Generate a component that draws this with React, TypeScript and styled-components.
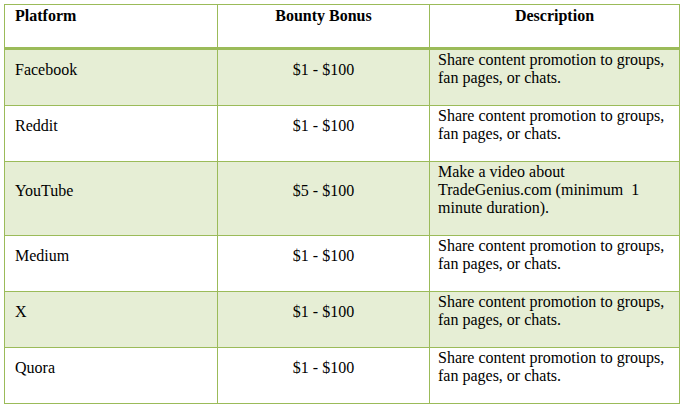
import * as React from 'react';
import styled, { createGlobalStyle } from 'styled-components';

const BORDER = '#9bbb59';
const SHADE = '#e6eed5';

const GlobalStyle = createGlobalStyle`
  html, body {
    margin: 0;
    padding: 0;
    background: #ffffff;
  }
`;

const Page = styled.div`
  padding: 4px 0 0 4px;
  font-family: 'Liberation Serif', 'Times New Roman', serif;
  font-size: 16px;
  line-height: 18px;
  color: #000000;
`;

const Table = styled.table`
  border-collapse: collapse;
  table-layout: fixed;
  width: 675px;
  border: 1px solid ${BORDER};
`;

type Align = 'left' | 'center';

const HeaderCell = styled.th<{ $align: Align }>`
  height: 40px;
  padding: 2px ${(p) => (p.$align === 'left' ? '10px' : '8px')} 0;
  border: 1px solid ${BORDER};
  border-bottom: 3px solid ${BORDER};
  text-align: ${(p) => p.$align};
  vertical-align: top;
  font-weight: bold;
`;

const Row = styled.tr<{ $shaded: boolean }>`
  background: ${(p) => (p.$shaded ? SHADE : '#ffffff')};
`;

const Cell = styled.td<{ $align: Align }>`
  padding: 3px ${(p) => (p.$align === 'left' ? '10px' : '8px')} 19px;
  border: 1px solid ${BORDER};
  text-align: ${(p) => p.$align};
  vertical-align: middle;
`;

const DescCell = styled.td`
  padding: 1px 8px 18px;
  border: 1px solid ${BORDER};
  vertical-align: top;
`;

const Line = styled.div`
  white-space: pre;
`;

const shareText = ['Share content promotion to groups,', 'fan pages, or chats.'];

const rows = [
  { platform: 'Facebook', bonus: '$1 - $100', desc: shareText },
  { platform: 'Reddit', bonus: '$1 - $100', desc: shareText },
  {
    platform: 'YouTube',
    bonus: '$5 - $100',
    desc: ['Make a video about', 'TradeGenius.com (minimum  1', 'minute duration).'],
  },
  { platform: 'Medium', bonus: '$1 - $100', desc: shareText },
  { platform: 'X', bonus: '$1 - $100', desc: shareText },
  { platform: 'Quora', bonus: '$1 - $100', desc: shareText },
];

export default function App() {
  return (
    <>
      <GlobalStyle />
      <Page>
        <Table>
          <colgroup>
            <col style={{ width: 213 }} />
            <col style={{ width: 212 }} />
            <col style={{ width: 250 }} />
          </colgroup>
          <thead>
            <tr>
              <HeaderCell $align="left">Platform</HeaderCell>
              <HeaderCell $align="center">Bounty Bonus</HeaderCell>
              <HeaderCell $align="center">Description</HeaderCell>
            </tr>
          </thead>
          <tbody>
            {rows.map((r, i) => (
              <Row key={r.platform} $shaded={i % 2 === 0}>
                <Cell $align="left">{r.platform}</Cell>
                <Cell $align="center">{r.bonus}</Cell>
                <DescCell>
                  {r.desc.map((l) => (
                    <Line key={l}>{l}</Line>
                  ))}
                </DescCell>
              </Row>
            ))}
          </tbody>
        </Table>
      </Page>
    </>
  );
}
